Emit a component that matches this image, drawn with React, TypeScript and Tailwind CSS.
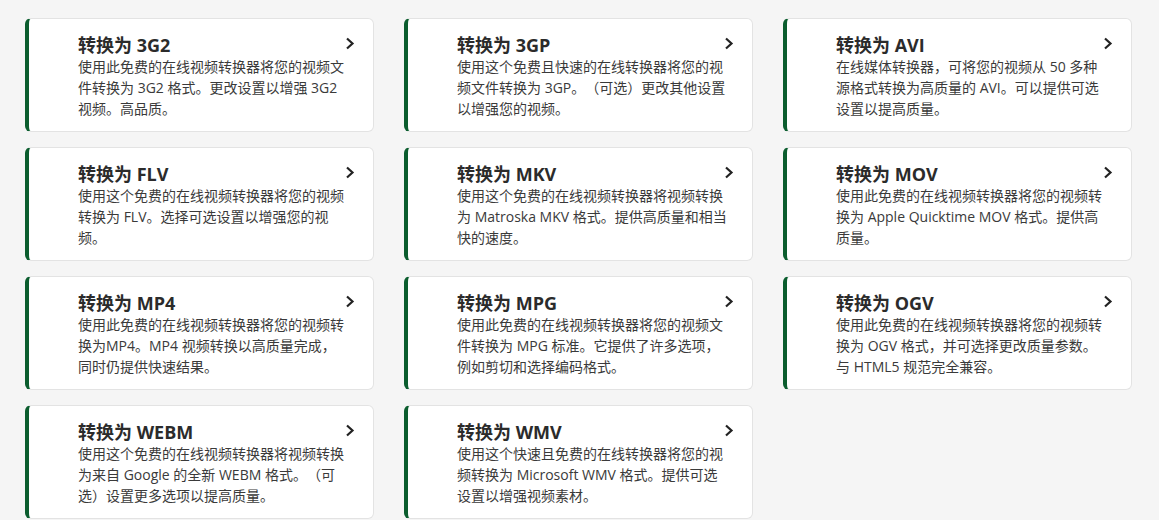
import React from "react"

interface Format {
  name: string
  desc: React.ReactNode
}

const formats: Format[] = [
  { name: "3G2", desc: "使用此免费的在线视频转换器将您的视频文件转换为 3G2 格式。更改设置以增强 3G2 视频。高品质。" },
  { name: "3GP", desc: "使用这个免费且快速的在线转换器将您的视频文件转换为 3GP。（可选）更改其他设置以增强您的视频。" },
  { name: "AVI", desc: "在线媒体转换器，可将您的视频从 50 多种源格式转换为高质量的 AVI。可以提供可选设置以提高质量。" },
  { name: "FLV", desc: "使用这个免费的在线视频转换器将您的视频转换为 FLV。选择可选设置以增强您的视频。" },
  { name: "MKV", desc: "使用这个免费的在线视频转换器将视频转换为 Matroska MKV 格式。提供高质量和相当快的速度。" },
  { name: "MOV", desc: "使用此免费的在线视频转换器将您的视频转换为 Apple Quicktime MOV 格式。提供高质量。" },
  {
    name: "MP4",
    desc: (
      <>
        使用此免费的在线视频转换器将您的视频转换为MP4。MP4 视频转换以高质量完成，
        <span className="whitespace-nowrap">同时</span>仍提供快速结果。
      </>
    ),
  },
  { name: "MPG", desc: "使用此免费的在线视频转换器将您的视频文件转换为 MPG 标准。它提供了许多选项，例如剪切和选择编码格式。" },
  { name: "OGV", desc: "使用此免费的在线视频转换器将您的视频转换为 OGV 格式，并可选择更改质量参数。与 HTML5 规范完全兼容。" },
  { name: "WEBM", desc: "使用这个免费的在线视频转换器将视频转换为来自 Google 的全新 WEBM 格式。（可选）设置更多选项以提高质量。" },
  { name: "WMV", desc: "使用这个快速且免费的在线转换器将您的视频转换为 Microsoft WMV 格式。提供可选设置以增强视频素材。" },
]

const Chevron = () => (
  <svg width="10" height="13" viewBox="0 0 10 13" fill="none" className="absolute top-[18px] right-[18px]">
    <polyline points="2,1.5 7.5,6.5 2,11.5" stroke="#222" strokeWidth="2.2" strokeLinejoin="miter" />
  </svg>
)

const FormatCard: React.FC<{ format: Format }> = ({ format }) => (
  <a
    href="#"
    className="relative block bg-white border border-[#e3e3e3] border-l-4 border-l-[#0b5d2e] rounded-md pt-[15px] pb-[12px] pl-[49px] pr-[22px]"
  >
    <h3 className="text-[18px] leading-[22px] font-bold text-[#2b2b2b]">转换为 {format.name}</h3>
    <p className="text-[14px] leading-[21px] text-[#3a3a3a] [text-spacing-trim:space-all]">{format.desc}</p>
    <Chevron />
  </a>
)

export default function App() {
  return (
    <div
      className="min-h-[520px] bg-[#f5f5f5] pt-[18px] pl-[25px]"
      style={{ fontFamily: '"Open Sans", "Noto Sans CJK SC", sans-serif' }}
    >
      <div className="grid grid-cols-[349px_349px_349px] gap-x-[30px] gap-y-[15px]">
        {formats.map((f) => (
          <FormatCard key={f.name} format={f} />
        ))}
      </div>
    </div>
  )
}
